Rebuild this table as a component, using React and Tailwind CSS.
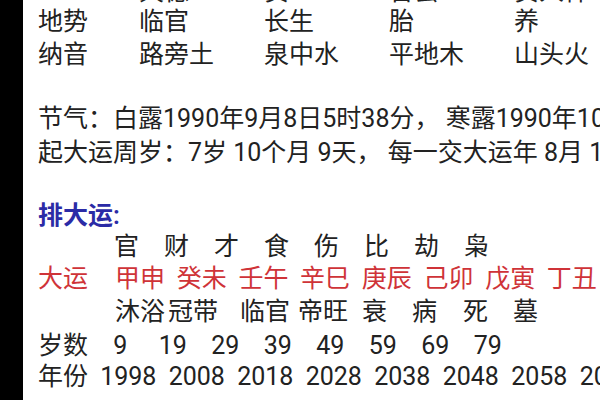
export default function App() {
  const font = "font-['Roboto','Noto_Sans_CJK_SC',sans-serif]";
  const topRow = ["天德", "贵", "合会", "贵人神"];
  const shiRow = ["临官", "长生", "胎", "养"];
  const naRow = ["路旁土", "泉中水", "平地木", "山头火"];
  const shishen = ["官", "财", "才", "食", "伤", "比", "劫", "枭"];
  const dayun = ["甲申", "癸未", "壬午", "辛巳", "庚辰", "己卯", "戊寅", "丁丑"];
  const ages = ["9", "19", "29", "39", "49", "59", "69", "79"];
  const years = ["1998", "2008", "2018", "2028", "2038", "2048", "2058", "2068"];
  const csWidths = ["w-[53px]", "w-[72px]", "w-[58px]", "w-[64px]", "w-[50px]", "w-[51px]", "w-[50px]", "w-[50px]"];
  const changsheng = ["沐浴", "冠带", "临官", "帝旺", "衰", "病", "死", "墓"];

  return (
    <div className={`flex h-[400px] w-[600px] overflow-hidden bg-white text-[25px] text-[#222] ${font}`}>
      <div className="w-[23px] shrink-0 bg-black" />
      <div className="flex min-w-0 flex-1 flex-col pl-[15px] mt-[-22px] whitespace-nowrap">
        <div className="flex h-[27px] shrink-0 items-center">
          <div className="w-[101px] shrink-0" />
          {topRow.map((t, i) => (
            <div key={i} className="w-[125px] shrink-0">{t}</div>
          ))}
        </div>
        <div className="flex h-[33px] shrink-0 items-center">
          <div className="w-[101px] shrink-0">地势</div>
          {shiRow.map((t, i) => (
            <div key={i} className="w-[125px] shrink-0">{t}</div>
          ))}
        </div>
        <div className="flex h-[33px] shrink-0 items-center">
          <div className="w-[101px] shrink-0">纳音</div>
          {naRow.map((t, i) => (
            <div key={i} className="w-[125px] shrink-0">{t}</div>
          ))}
        </div>
        <div className="h-[31px] shrink-0" />
        <div className="flex h-[34px] shrink-0 items-center">节气：白露1990年9月8日5时38分， 寒露1990年10月8日20时14分</div>
        <div className="flex h-[33px] shrink-0 items-center">起大运周岁：7岁 10个月 9天， 每一交大运年 8月 10日</div>
        <div className="h-[31px] shrink-0" />
        <div className="flex h-[31px] shrink-0 items-center font-semibold text-[#2b2ba6]">排大运:</div>
        <div className="flex h-[31px] shrink-0 items-center">
          <div className="w-[76px] shrink-0" />
          {shishen.map((t, i) => (
            <div key={i} className="w-[50px] shrink-0">{t}</div>
          ))}
        </div>
        <div className="flex h-[33px] shrink-0 items-center text-[#cf3338]">
          <div className="w-[77px] shrink-0">大运</div>
          {dayun.map((t, i) => (
            <div key={i} className="w-[61.7px] shrink-0">{t}</div>
          ))}
        </div>
        <div className="flex h-[34px] shrink-0 items-center">
          <div className="w-[77px] shrink-0" />
          {changsheng.map((t, i) => (
            <div key={i} className={`${csWidths[i]} shrink-0`}>{t}</div>
          ))}
        </div>
        <div className="flex h-[33px] shrink-0 items-center">
          <div className="w-[56px] shrink-0">岁数</div>
          {ages.map((t, i) => (
            <div key={i} className="w-[52.5px] shrink-0 text-center">{t}</div>
          ))}
        </div>
        <div className="flex h-[30px] shrink-0 items-center">
          <div className="w-[56px] shrink-0">年份</div>
          {years.map((t, i) => (
            <div key={i} className="w-[68.5px] shrink-0 text-center">{t}</div>
          ))}
        </div>
        <div className="flex h-[40px] shrink-0 items-end font-semibold text-[#2b2ba6]">排流年:</div>
      </div>
    </div>
  );
}
